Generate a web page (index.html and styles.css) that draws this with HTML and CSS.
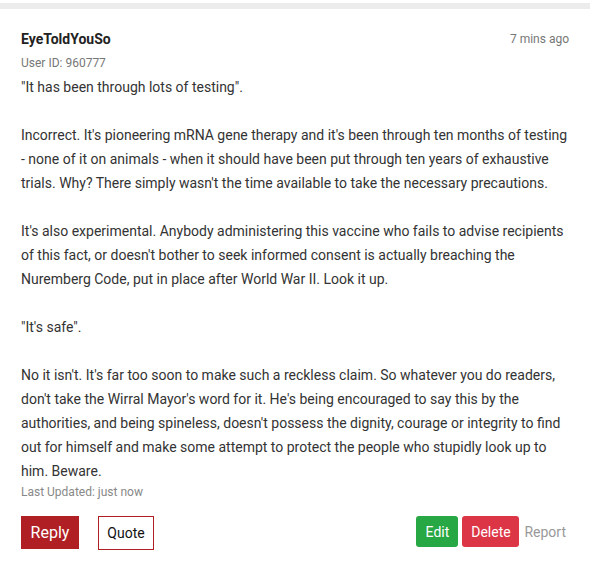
FILE: index.html
```html
<!DOCTYPE html>
<html>
<head>
<meta charset="utf-8">
<link rel="stylesheet" href="styles.css">
</head>
<body>
<div class="card">
  <div class="head">
    <div class="user">
      <div class="name">EyeToldYouSo</div>
      <div class="uid">User ID: 960777</div>
    </div>
    <div class="time">7 mins ago</div>
  </div>
  <div class="body">
    <p>"It has been through lots of testing".</p>
    <p>Incorrect. It's pioneering mRNA gene therapy and it's been through ten months of testing - none of it on animals - when it should have been put through ten years of exhaustive trials. Why? There simply wasn't the time available to take the necessary precautions.</p>
    <p>It's also experimental. Anybody administering this vaccine who fails to advise recipients of this fact, or doesn't bother to seek informed consent is actually breaching the Nuremberg Code, put in place after World War II. Look it up.</p>
    <p>"It's safe".</p>
    <p>No it isn't. It's far too soon to make such a reckless claim. So whatever you do readers, don't take the Wirral Mayor's word for it. He's being encouraged to say this by the authorities, and being spineless, doesn't possess the dignity, courage or integrity to find out for himself and make some attempt to protect the people who stupidly look up to him. Beware.</p>
  </div>
  <div class="updated">Last Updated: just now</div>
  <div class="actions">
    <div class="left">
      <button class="btn reply">Reply</button>
      <button class="btn quote">Quote</button>
    </div>
    <div class="right">
      <button class="btn edit">Edit</button>
      <button class="btn delete">Delete</button>
      <button class="btn report">Report</button>
    </div>
  </div>
</div>
</body>
</html>
```
FILE: styles.css
```css
html, body {
  margin: 0;
  padding: 0;
  background: #fff;
}
body {
  font-family: Roboto, "Liberation Sans", sans-serif;
  color: #333;
  padding-top: 3px;
}
.card {
  border-top: 6px solid #ececec;
  width: 590px;
  box-sizing: border-box;
  padding: 20px 21px 0 21px;
}
.head {
  display: flex;
  justify-content: space-between;
  align-items: flex-start;
}
.name {
  font-weight: bold;
  font-size: 14px;
  color: #222;
  line-height: 20px;
}
.uid {
  font-size: 12px;
  color: #777;
  line-height: 16px;
  margin-top: 6px;
}
.time {
  font-size: 12px;
  color: #777;
  line-height: 20px;
}
.body {
  font-size: 14px;
  line-height: 24px;
  color: #333;
  margin-top: 4px;
}
.body p {
  margin: 0 0 24px 0;
}
.body p:last-child {
  margin-bottom: 0;
}
.updated {
  font-size: 12px;
  color: #888;
  line-height: 18px;
}
.actions {
  display: flex;
  justify-content: space-between;
  align-items: flex-start;
  margin-top: 15px;
}
.left, .right {
  display: flex;
  align-items: flex-start;
}
.btn {
  font-family: Roboto, "Liberation Sans", sans-serif;
  border: none;
  cursor: pointer;
  margin: 0;
}
.reply {
  background: #b01f24;
  color: #fff;
  font-size: 16px;
  height: 33px;
  width: 58px;
  padding: 0;
}
.quote {
  background: #fff;
  color: #111;
  border: 1px solid #b01f24;
  font-size: 14px;
  height: 34px;
  width: 56px;
  padding: 0;
  margin-left: 19px;
}
.edit, .delete {
  color: #fff;
  font-size: 14px;
  height: 31px;
  border-radius: 3px;
  padding: 0;
}
.edit {
  background: #28a745;
  width: 42px;
}
.delete {
  background: #dc3545;
  width: 57px;
  margin-left: 4px;
}
.report {
  background: none;
  color: #999;
  font-size: 14px;
  height: 31px;
  padding: 0 3px 0 5px;
}
```
